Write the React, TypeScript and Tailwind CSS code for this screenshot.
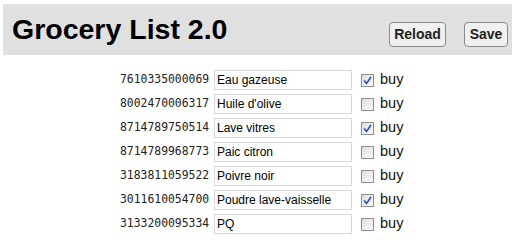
const items = [
  { code: "7610335000069", name: "Eau gazeuse", buy: true },
  { code: "8002470006317", name: "Huile d'olive", buy: false },
  { code: "8714789750514", name: "Lave vitres", buy: true },
  { code: "8714789968773", name: "Paic citron", buy: false },
  { code: "3183811059522", name: "Poivre noir", buy: false },
  { code: "3011610054700", name: "Poudre lave-vaisselle", buy: true },
  { code: "3133200095334", name: "PQ", buy: false },
];

function Check({ on }: { on: boolean }) {
  return (
    <span className="w-[13px] h-[13px] border border-[#8e8f8f] bg-gradient-to-br from-[#dcdcdc] to-[#fbfbfb] flex items-center justify-center">
      {on && (
        <svg width="9" height="9" viewBox="0 0 9 9">
          <path d="M1 4.5 L3.5 7.5 L8 1" fill="none" stroke="#2a4fa8" strokeWidth="1.6" />
        </svg>
      )}
    </span>
  );
}

export default function App() {
  return (
    <div className="w-[515px] h-[243px] bg-white pt-[4px] font-['Liberation_Sans',Arial,sans-serif] text-[#111]">
      {/* header */}
      <div className="mx-[3px] h-[51px] bg-[#e0e0e0] flex items-start justify-between pl-[9px] pr-[4px]">
        <h1 className="pt-[9px] text-[28.5px] leading-[32px] font-bold text-black">Grocery List 2.0</h1>
        <div className="pt-[18px] flex gap-[18px]">
          <button className="w-[57px] h-[25px] rounded-[4px] border border-[#8a8a8a] bg-[#f0f0f0] text-[14px] font-bold text-[#222]">
            Reload
          </button>
          <button className="w-[44px] h-[25px] rounded-[4px] border border-[#8a8a8a] bg-[#f0f0f0] text-[14px] font-bold text-[#222]">
            Save
          </button>
        </div>
      </div>

      {/* rows */}
      <div className="mt-[15px] ml-[120px] flex flex-col gap-[4px]">
        {items.map((it) => (
          <div key={it.code} className="h-[20px] flex items-center">
            <span className="w-[94px] font-['DejaVu_Sans_Mono',monospace] text-[11.4px] text-[#222]">{it.code}</span>
            <div className="w-[138px] h-[20px] border border-[#d6d6d6] bg-white pl-[2px] flex items-center text-[12px] text-black">
              {it.name}
            </div>
            <span className="ml-[9px]">
              <Check on={it.buy} />
            </span>
            <span className="ml-[6px] text-[14.5px] text-[#111]">buy</span>
          </div>
        ))}
      </div>
    </div>
  );
}
